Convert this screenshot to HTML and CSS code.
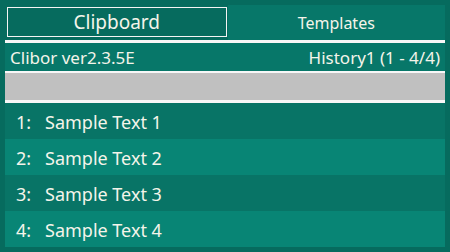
FILE: index.html
```html
<!DOCTYPE html>
<html lang="en">
<head>
    <meta charset="UTF-8">
    <meta name="viewport" content="width=device-width, initial-scale=1.0">
    <title>Clibor</title>
    <link rel="stylesheet" href="styles.css">
</head>
<body>
    <div class="window">
        <div class="tabs">
            <div class="tab active">Clipboard</div>
            <div class="tab">Templates</div>
        </div>
        <div class="rule thick"></div>
        <div class="status">
            <span>Clibor ver2.3.5E</span>
            <span>History1 (1 - 4/4)</span>
        </div>
        <div class="rule"></div>
        <div class="search"></div>
        <div class="rule thick"></div>
        <ul class="history">
            <li><span class="num">1:</span>Sample Text 1</li>
            <li><span class="num">2:</span>Sample Text 2</li>
            <li><span class="num">3:</span>Sample Text 3</li>
            <li><span class="num">4:</span>Sample Text 4</li>
        </ul>
    </div>
</body>
</html>
```

FILE: styles.css
```css
html, body {
    margin: 0;
    padding: 0;
}
body {
    font-family: 'Noto Sans', 'Open Sans', sans-serif;
    color: #f4f4ea;
    background-color: #066b5e;
}
.window {
    width: 450px;
    height: 252px;
    box-sizing: border-box;
    padding: 5px;
    background-color: #066b5e;
    display: flex;
    flex-direction: column;
}
.tabs {
    display: flex;
    height: 35px;
}
.tab {
    flex: 1;
    display: flex;
    align-items: center;
    justify-content: center;
    background-color: #077769;
    font-size: 16px;
}
.tab.active {
    background-color: #066b5e;
    border: 1px solid #f4f4f4;
    margin: 2px 1px 3px 2px;
    font-size: 19px;
}
.rule {
    height: 2px;
    background-color: #f7f7f7;
}
.rule.thick {
    height: 3px;
}
.status {
    height: 28px;
    display: flex;
    align-items: center;
    justify-content: space-between;
    padding: 0 5px 0 5px;
    background-color: #077769;
    font-size: 17px;
}
.search {
    height: 27px;
    background-color: #c0c0c0;
}
.history {
    list-style: none;
    margin: 0;
    padding: 0;
}
.history li {
    height: 36px;
    display: flex;
    align-items: center;
    padding: 2px 0 0 11px;
    box-sizing: border-box;
    font-size: 18px;
    background-color: #087466;
}
.history li:nth-child(even) {
    background-color: #088575;
}
.num {
    width: 29px;
}
```
